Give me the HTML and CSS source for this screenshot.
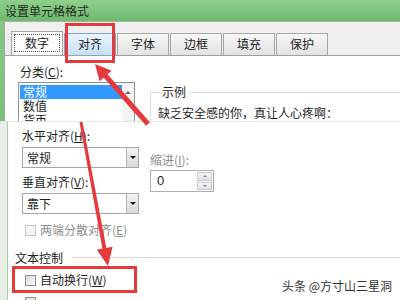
FILE: index.html
```html
<!DOCTYPE html>
<html lang="zh-CN">

<head>
    <meta charset="UTF-8">
    <title>设置单元格格式</title>
    <link rel="stylesheet" href="styles.css">
</head>

<body>
    <div class="window">
        <div class="titlebar">设置单元格格式</div>
        <div class="frame">
            <div class="tabs">
                <div class="tab active"><span class="focus">数字</span></div>
                <div class="tab hover">对齐</div>
                <div class="tab">字体</div>
                <div class="tab">边框</div>
                <div class="tab">填充</div>
                <div class="tab">保护</div>
            </div>
            <div class="panel">
                <div class="panel-body">
                    <div class="category">
                        <div class="label">分类(<u>C</u>):</div>
                        <div class="listbox">
                            <div class="list-items">
                                <div class="list-item selected">常规</div>
                                <div class="list-item">数值</div>
                                <div class="list-item">货币</div>
                            </div>
                            <div class="list-scroll"><span class="scroll-up"></span></div>
                        </div>
                    </div>
                    <fieldset class="sample">
                        <legend>示例</legend>
                        <div class="sample-text">缺乏安全感的你，真让人心疼啊：</div>
                    </fieldset>
                </div>
            </div>
        </div>
    </div>

    <!-- pasted part of the 对齐 tab -->
    <div class="overlay">
        <div class="label">水平对齐(<u>H</u>):</div>
        <div class="align-grid">
            <div class="align-left">
                <div class="select">
                    <span class="select-value">常规</span>
                    <span class="select-btn"><i></i></span>
                </div>
                <div class="label label-v">垂直对齐(<u>V</u>):</div>
                <div class="select select-2">
                    <span class="select-value">靠下</span>
                    <span class="select-btn"><i></i></span>
                </div>
            </div>
            <div class="align-right">
                <div class="label disabled">缩进(<u>I</u>):</div>
                <div class="spin">
                    <span class="spin-value">0</span>
                    <span class="spin-btns">
                        <span class="spin-btn"><i class="up"></i></span>
                        <span class="spin-btn"><i class="down"></i></span>
                    </span>
                </div>
            </div>
        </div>
        <div class="check disabled"><span class="box"></span>两端分散对齐(<u>E</u>)</div>
        <div class="section">
            <span>文本控制</span>
            <span class="section-line"></span>
        </div>
        <div class="check check-wrap"><span class="box"></span>自动换行(<u>W</u>)</div>
        <div class="check check-next"><span class="box"></span></div>
    </div>

    <svg class="marks" width="400" height="300" viewBox="0 0 400 300">
        <rect x="66.5" y="24.5" width="47" height="37" />
        <rect x="13.5" y="267.5" width="122" height="24" />
        <line x1="148" y1="124" x2="103" y2="73" />
        <polygon class="fill" points="95,64 111.6,70.7 99.6,81.3" />
        <polygon class="fill" points="79.5,122 82.5,122 106.5,249 102.5,249" />
        <polygon class="fill" points="108,266 112.6,246.8 96.8,249.8" />
    </svg>

    <div class="watermark">头条 @方寸山三星洞</div>
</body>

</html>
```

FILE: styles.css
```css
body {
    margin: 0;
    width: 400px;
    height: 300px;
    overflow: hidden;
    position: relative;
    font-family: "Noto Sans CJK SC", "Liberation Sans", sans-serif;
    font-size: 12px;
    color: #1e1e1e;
    background: linear-gradient(#86c984, #6cb46c);
}

u {
    text-decoration: underline;
}

.window {
    height: 300px;
    display: flex;
    flex-direction: column;
}

.titlebar {
    height: 21px;
    line-height: 21px;
    padding-left: 5px;
    color: #262626;
    background: linear-gradient(#8fd08c, #6db96d);
}

.frame {
    flex: 1;
    margin-left: 4px;
    display: flex;
    flex-direction: column;
    background-color: #f0f0f0;
    border-top: 1px solid #a9b5a9;
    border-left: 1px solid #a0a8a0;
}

.tabs {
    display: flex;
    align-items: flex-end;
    gap: 1px;
    padding: 9px 0 0 6px;
}

.tab {
    box-sizing: border-box;
    width: 52px;
    height: 22px;
    line-height: 20px;
    text-align: center;
    border: 1px solid #a5a5a5;
    border-bottom: none;
    background: linear-gradient(#f7f7f7, #e2e2e2);
}

.tab.active {
    height: 24px;
    line-height: 22px;
    background: #fff;
}

.tab.hover {
    border-color: #7da2ce;
    background: linear-gradient(#eaf5fe, #c3e0f7);
}

.focus {
    display: inline-block;
    width: 44px;
    line-height: 16px;
    margin-top: 2px;
    border: 1px dotted #555;
}

.panel {
    flex: 1;
    background-color: #fff;
    border-top: 1px solid #a0a0a0;
}

.panel-body {
    display: flex;
    align-items: flex-start;
    gap: 15px;
    padding-left: 13px;
}

.label {
    line-height: 14px;
}

.category .label {
    margin: 9px 0 0 2px;
}

.listbox {
    box-sizing: border-box;
    width: 117px;
    height: 60px;
    margin-top: 3px;
    display: flex;
    border: 1px solid #8e9298;
    background-color: #fff;
}

.list-items {
    flex: 1;
    padding: 2px 0 0 1px;
}

.list-item {
    height: 14px;
    line-height: 14px;
    padding-left: 3px;
}

.list-item.selected {
    background-color: #3399ff;
    color: #fff;
}

.list-scroll {
    width: 12px;
    background-color: #f3f3f3;
    display: flex;
    justify-content: center;
}

.scroll-up {
    width: 0;
    height: 0;
    margin-top: 8px;
    border-left: 3px solid transparent;
    border-right: 3px solid transparent;
    border-bottom: 3px solid #666;
}

.sample {
    flex: 1;
    margin: 30px 0 0 0;
    padding: 8px 0 0 7px;
    border: none;
    border-top: 1px solid #d5dfe5;
    border-left: 1px solid #d5dfe5;
}

.sample legend {
    padding: 0 2px;
    margin-left: 2px;
    line-height: 12px;
}

.sample-text {
    line-height: 14px;
}

.overlay {
    position: absolute;
    left: 0;
    top: 121px;
    right: 0;
    bottom: 0;
    padding: 7px 0 0 22px;
    background: linear-gradient(to right, #e9eee9 0, #e9eee9 7px, #a6d3a2 7px, #a6d3a2 8px, #fff 8px);
    border-top: 1px solid #e4e4e4;
}

.align-grid {
    display: flex;
    align-items: flex-start;
    gap: 11px;
    margin-top: 4px;
}

.select {
    box-sizing: border-box;
    width: 117px;
    height: 21px;
    display: flex;
    border: 1px solid #a6a6a6;
    background-color: #fff;
}

.select-value {
    flex: 1;
    line-height: 19px;
    padding-left: 4px;
}

.select-btn {
    width: 11px;
    display: flex;
    align-items: center;
    justify-content: center;
    border-left: 1px solid #b5b5b5;
    background: linear-gradient(#f2f2f2, #dadada);
}

.select-btn i {
    width: 0;
    height: 0;
    border-left: 3px solid transparent;
    border-right: 3px solid transparent;
    border-top: 3px solid #111;
}

.label-v {
    margin-top: 7px;
}

.select-2 {
    margin-top: 4px;
}

.align-right .label {
    margin-top: 6px;
}

.disabled {
    color: #8d8d8d;
}

.spin {
    box-sizing: border-box;
    width: 64px;
    height: 22px;
    margin-top: 3px;
    display: flex;
    border: 1px solid #abadb3;
    background-color: #fff;
}

.spin-value {
    flex: 1;
    line-height: 20px;
    padding-left: 6px;
    font-family: "Liberation Sans", sans-serif;
    font-size: 13px;
}

.spin-btns {
    width: 15px;
    display: flex;
    flex-direction: column;
    gap: 1px;
    padding: 1px;
}

.spin-btn {
    flex: 1;
    display: flex;
    align-items: center;
    justify-content: center;
    border: 1px solid #c9c9c9;
    background: linear-gradient(#f4f4f4, #e3e3e3);
}

.spin-btn i {
    width: 0;
    height: 0;
    border-left: 2px solid transparent;
    border-right: 2px solid transparent;
}

.spin-btn .up {
    border-bottom: 2px solid #6a8db5;
}

.spin-btn .down {
    border-top: 2px solid #6a8db5;
}

.check {
    display: flex;
    align-items: center;
    height: 12px;
    margin-top: 10px;
    padding-left: 3px;
    line-height: 12px;
}

.box {
    box-sizing: border-box;
    width: 11px;
    height: 11px;
    margin-right: 4px;
    border: 1px solid #8f8f8f;
    background: linear-gradient(135deg, #dcdcdc, #f8f8f8);
}

.check.disabled .box {
    border-color: #c4c4c4;
    background: #f4f4f4;
}

.section {
    display: flex;
    align-items: center;
    margin: 15px 0 0 -7px;
    line-height: 14px;
}

.section-line {
    flex: 1;
    height: 1px;
    margin: 0 0 1px 8px;
    background-color: #dcdcdc;
}

.check-wrap {
    margin-top: 9px;
}

.marks {
    position: absolute;
    left: 0;
    top: 0;
    pointer-events: none;
}

.marks rect,
.marks line {
    fill: none;
    stroke: #e5393c;
    stroke-width: 3;
}

.marks line {
    stroke-width: 5;
}

.marks .fill {
    fill: #e5393c;
}

.watermark {
    position: absolute;
    right: 8px;
    bottom: 7px;
    line-height: 14px;
    color: #333;
    text-shadow: 0 0 2px #fff;
}
```
